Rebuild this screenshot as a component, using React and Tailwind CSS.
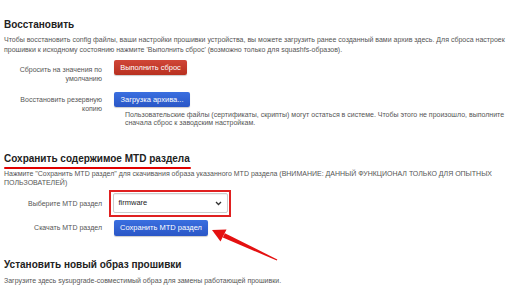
import React from "react";

function Row({ label, labelPt, children, className = "" }) {
  return (
    <div className={"flex " + className}>
      <div
        className="w-[98px] shrink-0 text-right text-[7px] leading-[9px] text-[#555]"
        style={{ paddingTop: labelPt }}
      >
        {label}
      </div>
      <div className="ml-[12px] flex flex-col">{children}</div>
    </div>
  );
}

export default function App() {
  return (
    <div className="relative w-[516px] h-[289px] overflow-hidden bg-white font-['Liberation_Sans',Arial,sans-serif] text-[#555]">
      <div className="px-[4px] pt-[18px]">
        <h2 className="text-[10px] font-bold leading-[14px] text-[#222]">Восстановить</h2>
        <p className="mt-[3px] text-[7px] leading-[10px] whitespace-nowrap">
          Чтобы восстановить config файлы, ваши настройки прошивки устройства, вы можете загрузить ранее созданный вами архив здесь. Для сброса настроек
          <br />
          прошивки к исходному состоянию нажмите 'Выполнить сброс' (возможно только для squashfs-образов).
        </p>

        <Row label={<>Сбросить на значения по<br />умолчанию</>} labelPt="4.5px" className="mt-[5px] h-[32px]">
          <button className="h-[15px] w-[73px] rounded-[2px] bg-gradient-to-b from-[#d04637] to-[#b8301f] text-[7.5px] text-white shadow-[0_1px_1px_rgba(0,0,0,0.2)]">
            Выполнить сброс
          </button>
        </Row>

        <Row label={<>Восстановить резервную<br />копию</>} labelPt="2.5px">
          <button className="h-[15px] w-[76px] rounded-[2px] bg-gradient-to-b from-[#3a6fe0] to-[#2a56c6] text-[7.5px] text-white shadow-[0_1px_1px_rgba(0,0,0,0.2)]">
            Загрузка архива...
          </button>
          <p className="mt-[3.5px] pl-[11px] text-[7px] leading-[8.5px] whitespace-nowrap">
            Пользовательские файлы (сертификаты, скрипты) могут остаться в системе. Чтобы этого не произошло, выполните
            <br />
            сначала сброс к заводским настройкам.
          </p>
        </Row>

        <div className="mt-[24px] inline-flex flex-col">
          <h2 className="text-[10px] font-bold leading-[14px] text-[#222]">Сохранить содержимое MTD раздела</h2>
          <div className="mt-[1px] h-[2.5px] w-[187px] rounded-full bg-[#e00000]" />
        </div>
        <p className="mt-[0px] text-[7px] leading-[9px] whitespace-nowrap">
          Нажмите "Сохранить MTD раздел" для скачивания образа указанного MTD раздела (ВНИМАНИЕ: ДАННЫЙ ФУНКЦИОНАЛ ТОЛЬКО ДЛЯ ОПЫТНЫХ
          <br />
          ПОЛЬЗОВАТЕЛЕЙ)
        </p>

        <div className="mt-[2.5px] flex items-center">
          <div className="w-[98px] shrink-0 text-right text-[7px] leading-[9px]">Выберите MTD раздел</div>
          <div className="ml-[7px] border-2 border-[#e02020] p-[1.5px]">
            <div className="flex h-[20px] w-[115px] items-center justify-between rounded-[2px] border border-[#ccc] bg-white pl-[5px] pr-[5px] shadow-[inset_0_1px_1px_rgba(0,0,0,0.06)]">
              <span className="text-[7.5px] text-[#222]">firmware</span>
              <svg width="7" height="5" viewBox="0 0 7 5">
                <path d="M1 1 L3.5 3.5 L6 1" fill="none" stroke="#333" strokeWidth="1.3" />
              </svg>
            </div>
          </div>
        </div>

        <div className="mt-[3px] flex items-center">
          <div className="w-[98px] shrink-0 text-right text-[7px] leading-[9px]">Скачать MTD раздел</div>
          <button className="ml-[12px] h-[16px] w-[94px] rounded-[2px] bg-gradient-to-b from-[#3a6fe0] to-[#2a56c6] text-[7.5px] text-white shadow-[0_1px_1px_rgba(0,0,0,0.2)]">
            Сохранить MTD раздел
          </button>
        </div>

        <h2 className="mt-[22px] text-[10px] font-bold leading-[14px] text-[#222]">Установить новый образ прошивки</h2>
        <p className="mt-[4px] text-[7px] leading-[9px] whitespace-nowrap">
          Загрузите здесь sysupgrade-совместимый образ для замены работающей прошивки.
        </p>
      </div>

      <svg className="pointer-events-none absolute left-0 top-0" width="516" height="289" viewBox="0 0 516 289">
        <polygon points="212,230 226.5,229.5 220.5,241.5" fill="#e41010" />
        <polygon points="222.8,237.6 224.9,233.2 277.3,259.5 276.8,260.5" fill="#e41010" />
      </svg>
    </div>
  );
}
